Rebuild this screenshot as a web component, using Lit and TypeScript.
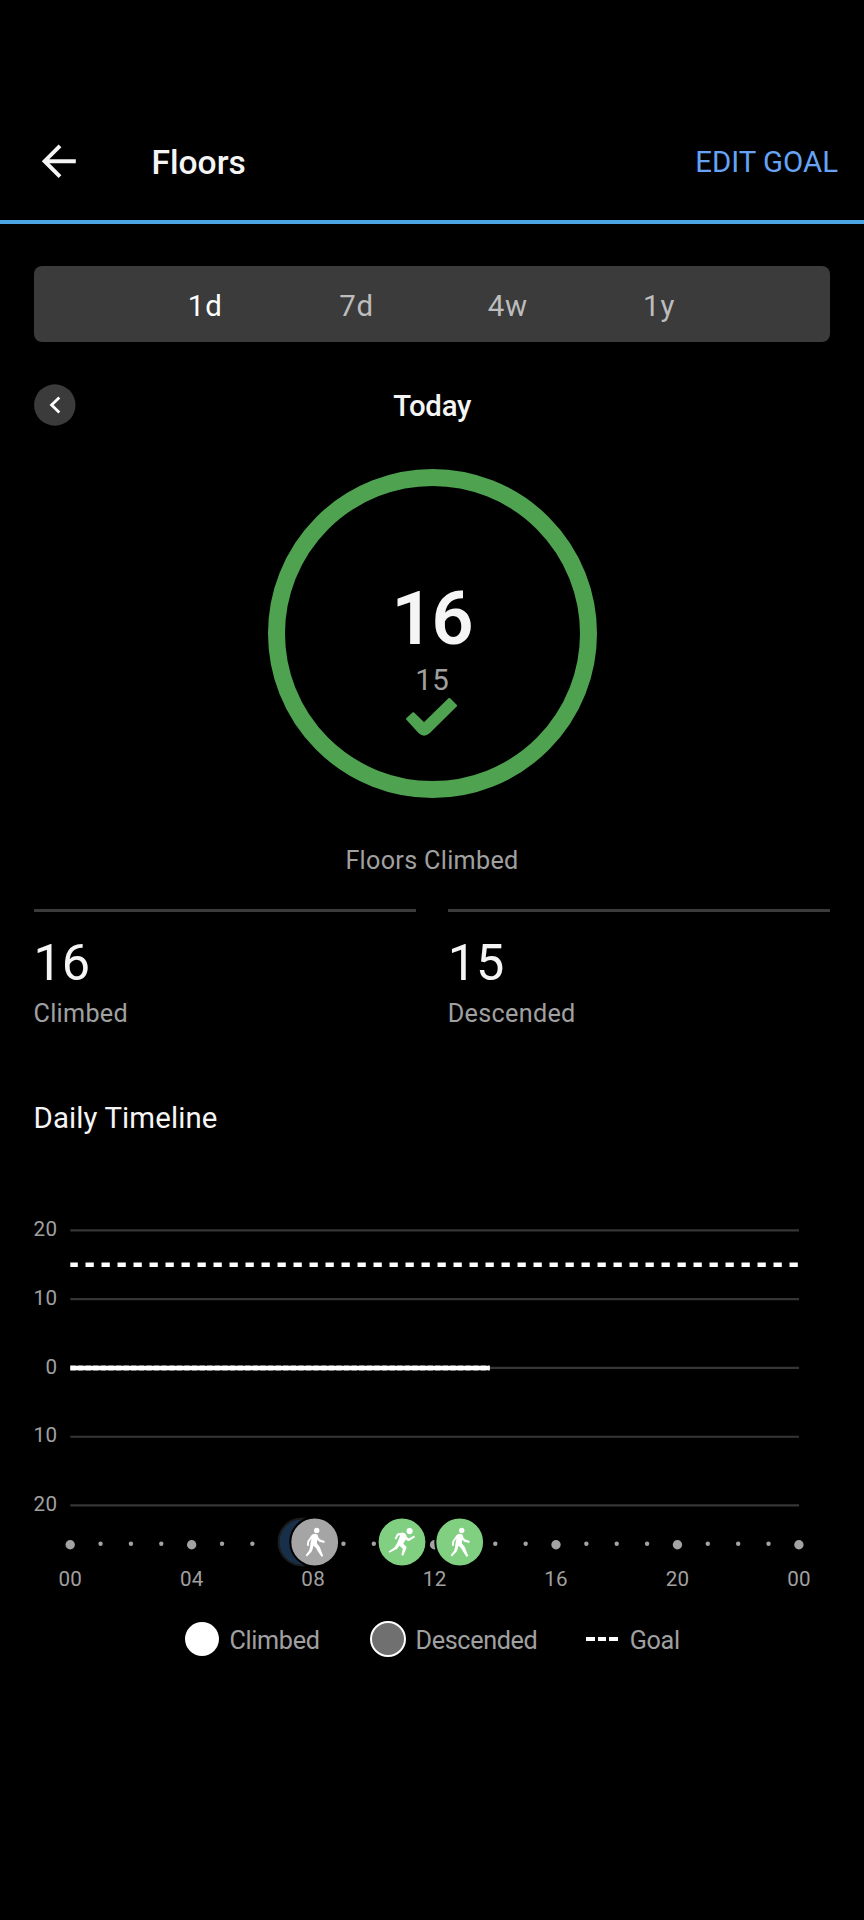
import { LitElement, html, css, svg } from "lit";
import { customElement, property } from "lit/decorators.js";

const WALK = svg`
  <circle cx="2" cy="-11.6" r="2.7"></circle>
  <path d="M-3.2 -6.8 Q-0.5 -9 2.6 -7.6 Q3.6 -6.2 3.6 -4.4 L5.6 -2.4 L10 -0.9 L9.6 0.9 L4.6 -0.2 L2.4 -2.2 L2.2 1.6 Q5.4 4.6 6.2 8 L8.6 14 L6.8 14.8 L2.8 8.8 Q1.4 5.4 -1.4 3.8 Q-1.6 7.2 -3.2 9.8 L-7.8 14.4 L-9 13.2 L-5.4 8.2 Q-4.4 4.6 -4.2 1 L-3.2 -3.6 L-5.6 0 L-6 4 L-7.8 3.8 L-7.4 -0.8 Z"></path>`;

const RUN = svg`
  <circle cx="7.6" cy="-10.9" r="3.1"></circle>
  <path d="M-4.8 -8.6 L0.6 -9.6 Q4.6 -8.8 4.6 -5.2 L6.8 -3.4 L12 -6.4 L13 -4.8 L7 -1 Q5.2 -1 3.8 -2.6 L1.2 1.8 L4.2 4.4 Q4.8 5.4 4.2 6.8 L1.2 13.8 L-0.6 13 L0.8 6.8 L-2.6 3.8 L-4.6 6.4 Q-5.4 7.2 -6.8 7.8 L-12.6 10.8 L-13.4 9.4 L-7.4 5.2 L-4.6 0.4 L-1.8 -6.6 L-3.6 -6.4 L-5.8 -2.6 L-7.4 -3.4 Z"></path>`;

@customElement("stat-tile")
class StatTile extends LitElement {
  @property() value = "";
  @property() label = "";
  static styles = css`
    :host { display: block; flex: 1; border-top: 3px solid #3b3b3b; padding-top: 21px; }
    .value { font-size: 50.4px; line-height: 60px; color: #f5f5f5; }
    .label { font-size: 25.2px; line-height: 30px; margin-top: 6px; color: #a0a0a0; letter-spacing: 0.3px; }
  `;
  render() {
    return html`<div class="value">${this.value}</div><div class="label">${this.label}</div>`;
  }
}

@customElement("daily-chart")
class DailyChart extends LitElement {
  static styles = css`
    :host { display: block; }
    svg { display: block; }
    text { font-family: Roboto, sans-serif; font-size: 20.6px; fill: #a0a0a0; letter-spacing: 0.3px; }
    .grid { stroke: #363636; stroke-width: 2.1; }
    .goal { stroke: #fff; stroke-width: 4.6; stroke-dasharray: 8.3 7.7; }
    .data { stroke: #fff; stroke-width: 4.7; stroke-linecap: butt; }
    .ticks { stroke: #fff; stroke-width: 5.4; stroke-dasharray: 5.4 2.2; opacity: 0.5; }
    .dot { fill: #a3a3a3; }
    .glyph { fill: #fff; }
    .badge { stroke: #000; stroke-width: 2; }
    .sleep { fill: #182f49; stroke: #1b1b1b; stroke-width: 2; }
    .gray { fill: #a5a5a5; }
    .green { fill: #81cf80; }
  `;
  render() {
    const left = 70.3, right = 799, step = (right - left) / 24;
    const rows: [string, number][] = [["20", 1230.4], ["10", 1299.1], ["0", 1367.9], ["10", 1436.7], ["20", 1505.4]];
    const hours = Array.from({ length: 25 }, (_, i) => i);
    const badges: [number, string, unknown][] = [
      [314.7, "gray", WALK], [402, "green", RUN], [459.7, "green", WALK],
    ];
    return html`
      <svg width="864" height="400" viewBox="0 1200 864 400">
        ${rows.map(([label, y]) => svg`
          <line class="grid" x1=${left} x2=${right} y1=${y} y2=${y}></line>
          <text x="57.3" y=${y + 5.6} text-anchor="end">${label}</text>`)}
        <line class="goal" x1=${left} x2="798" y1="1264.7" y2="1264.7" stroke-dashoffset="0.8"></line>
        <line class="data" x1=${left} x2="489.8" y1="1368" y2="1368"></line>
        <line class="ticks" x1=${left} x2="489.8" y1="1368" y2="1368"></line>
        ${hours.map((h) => svg`<circle class="dot" cx=${left + h * step - 0.1} cy=${h % 4 ? 1543.8 : 1544.8} r=${h % 4 ? 2.2 : 4.7}></circle>`)}
        ${hours.filter((h) => h % 4 === 0).map((h) => svg`
          <text x=${left + h * step} y="1586.4" text-anchor="middle">${String(h % 24).padStart(2, "0")}</text>`)}
        <circle class="sleep" cx="302" cy="1542" r="23.5"></circle>
        ${badges.map(([x, kind, icon]) => svg`
          <g transform="translate(${x} 1542)">
            <circle class="badge ${kind}" r="24.4"></circle>
            <g class="glyph">${icon}</g>
          </g>`)}
      </svg>`;
  }
}

@customElement("app-root")
class AppRoot extends LitElement {
  static styles = css`
    :host { display: block; width: 864px; height: 1920px; background: #000; color: #f5f5f5; font-family: Roboto, sans-serif; overflow: hidden; }
    header { box-sizing: border-box; height: 224px; border-bottom: 4px solid #4ba5e4; padding: 101px 26px 0 40px; display: flex; align-items: center; }
    .back { display: block; }
    .title { font-size: 33.6px; font-weight: 500; line-height: 40px; margin-left: 71.5px; flex: 1; padding-top: 5px; }
    .edit { font-size: 29.4px; line-height: 36px; color: #66a3f5; padding-top: 2px; }
    .tabs { box-sizing: border-box; margin: 42px 34px 0 33.5px; height: 76px; border-radius: 8px; background: #3b3b3b; display: flex; justify-content: center; align-items: center; font-size: 29.4px; color: #bdbdbd; letter-spacing: 0.8px; }
    .tab { width: 151.3px; text-align: center; padding: 4px 0 0 0.8px; box-sizing: border-box; }
    .on { color: #fff; }
    .day { display: grid; grid-template-columns: 42px 1fr 42px; align-items: center; margin: 42px 33px 0 33.5px; }
    .prev { display: block; }
    .today { text-align: center; font-size: 29.4px; font-weight: 500; line-height: 36px; letter-spacing: -0.25px; padding-top: 2px; }
    .ring { box-sizing: border-box; width: 329px; height: 329px; border: 17px solid #4fa350; border-radius: 50%; margin: 43px auto 0; display: flex; flex-direction: column; align-items: center; padding-top: 90px; }
    .big { font-size: 73.6px; font-weight: 600; line-height: 87px; letter-spacing: -2px; margin-left: -1px; }
    .small { font-size: 29.4px; line-height: 34px; color: #a0a0a0; letter-spacing: 0.6px; padding-left: 0.5px; }
    .check { display: block; }
    .caption { text-align: center; font-size: 25.2px; line-height: 30px; color: #a0a0a0; margin-top: 48px; letter-spacing: 0.3px; }
    .stats { display: flex; gap: 32px; margin: 33px 34px 0 33.5px; }
    h2 { margin: 71px 33.5px 0; font-size: 29.4px; font-weight: 400; line-height: 36px; letter-spacing: 0.12px; }
    daily-chart { margin-top: 64px; }
    .legend { display: flex; align-items: center; margin: 20px 0 0 184.5px; height: 38px; font-size: 25.2px; color: #a0a0a0; letter-spacing: -0.35px; }
    .key { display: flex; align-items: center; }
    .key span { padding-top: 3px; }
    .disc { box-sizing: border-box; width: 34px; height: 34px; border-radius: 50%; background: #fff; margin-right: 11px; }
    .desc { width: 36px; height: 36px; background: #707070; border: 2px solid #fff; margin: 0 10px 0 50px; }
    .dashes { display: flex; gap: 3px; margin: 0 12px 0 48.5px; }
    .dash { width: 8.6px; height: 4.5px; background: #fff; }
  `;
  render() {
    return html`
      <header>
        <svg class="back" width="40" height="40" viewBox="40 141 40 40" fill="none" stroke="#f5f5f5" stroke-width="4"><path d="M75.8 161.2H45M60 145.8L44.6 161.2L60 176.6"></path></svg>
        <div class="title">Floors</div>
        <div class="edit">EDIT GOAL</div>
      </header>
      <div class="tabs">
        ${["1d", "7d", "4w", "1y"].map((t, i) => html`<div class="tab ${i === 0 ? "on" : ""}">${t}</div>`)}
      </div>
      <div class="day">
        <svg class="prev" width="42" height="42" viewBox="0 0 42 42"><circle cx="20.8" cy="21" r="20.7" fill="#3b3b3b"></circle><path d="M25.3 13.6L17.6 21L25.3 28.4" fill="none" stroke="#fff" stroke-width="2.8"></path></svg>
        <div class="today">Today</div>
      </div>
      <div class="ring">
        <div class="big">16</div>
        <div class="small">15</div>
        <svg class="check" width="52" height="40" viewBox="0 0 52 40"><path d="M1.3 22L7.3 16.4L18 26.8L43.3 2.2L49.8 8.7L22.8 35.4Q18 39.4 13.6 35.4Z" fill="#4fa350" stroke="#4fa350" stroke-width="2.4" stroke-linejoin="round"></path></svg>
      </div>
      <div class="caption">Floors Climbed</div>
      <div class="stats">
        <stat-tile value="16" label="Climbed"></stat-tile>
        <stat-tile value="15" label="Descended"></stat-tile>
      </div>
      <h2>Daily Timeline</h2>
      <daily-chart></daily-chart>
      <div class="legend">
        <div class="key"><div class="disc"></div><span>Climbed</span></div>
        <div class="key"><div class="disc desc"></div><span>Descended</span></div>
        <div class="key"><div class="dashes"><div class="dash"></div><div class="dash"></div><div class="dash"></div></div><span>Goal</span></div>
      </div>`;
  }
}
